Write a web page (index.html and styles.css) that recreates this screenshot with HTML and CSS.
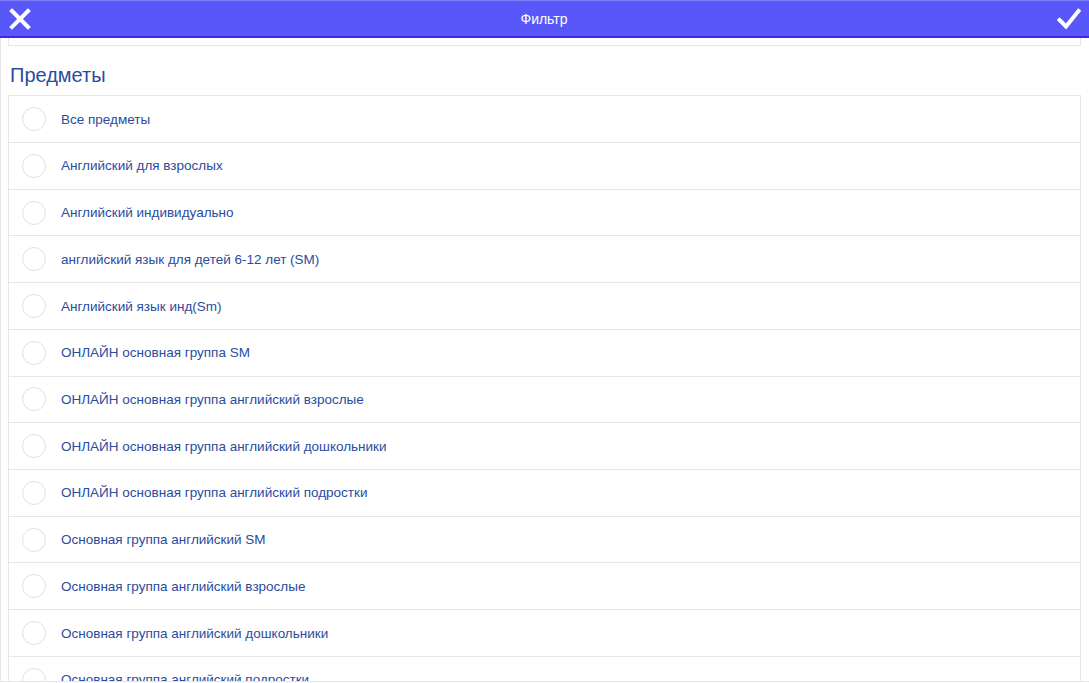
FILE: index.html
```html
<!DOCTYPE html>
<html lang="ru">
<head>
<meta charset="utf-8">
<title>Фильтр</title>
<link rel="stylesheet" href="styles.css">
</head>
<body>
<header class="header">
  <button class="hbtn close" aria-label="Закрыть">
    <svg width="22" height="22" viewBox="0 0 22 22"><path d="M3 3 L19 19 M19 3 L3 19" stroke="#fff" stroke-width="4" stroke-linecap="square" fill="none"/></svg>
  </button>
  <div class="title">Фильтр</div>
  <button class="hbtn ok" aria-label="Применить">
    <svg width="24" height="22" viewBox="0 0 24 22"><path d="M2.5 12 L9 18.5 L21.5 3" stroke="#fff" stroke-width="4" stroke-linecap="square" stroke-linejoin="miter" fill="none"/></svg>
  </button>
</header>
<main class="content">
  <div class="prev-card"></div>
  <h2 class="section-title">Предметы</h2>
  <ul class="list">
    <li class="row"><span class="radio"></span><span class="label">Все предметы</span></li>
    <li class="row"><span class="radio"></span><span class="label">Английский для взрослых</span></li>
    <li class="row"><span class="radio"></span><span class="label">Английский индивидуально</span></li>
    <li class="row"><span class="radio"></span><span class="label">английский язык для детей 6-12 лет (SM)</span></li>
    <li class="row"><span class="radio"></span><span class="label">Английский язык инд(Sm)</span></li>
    <li class="row"><span class="radio"></span><span class="label">ОНЛАЙН основная группа SM</span></li>
    <li class="row"><span class="radio"></span><span class="label">ОНЛАЙН основная группа английский взрослые</span></li>
    <li class="row"><span class="radio"></span><span class="label">ОНЛАЙН основная группа английский дошкольники</span></li>
    <li class="row"><span class="radio"></span><span class="label">ОНЛАЙН основная группа английский подростки</span></li>
    <li class="row"><span class="radio"></span><span class="label">Основная группа английский SM</span></li>
    <li class="row"><span class="radio"></span><span class="label">Основная группа английский взрослые</span></li>
    <li class="row"><span class="radio"></span><span class="label">Основная группа английский дошкольники</span></li>
    <li class="row"><span class="radio"></span><span class="label">Основная группа английский подростки</span></li>
  </ul>
</main>
</body>
</html>
```
FILE: styles.css
```css
* { box-sizing: border-box; }
html, body { margin: 0; padding: 0; background: #fff; }
body {
  font-family: "Liberation Sans", Arial, sans-serif;
  width: 1089px;
  height: 683px;
  overflow: hidden;
}
.header {
  height: 38px;
  background: #5858fa;
  border-bottom: 2px solid #4a22ea;
  border-top: 1px solid #7e7efb;
  display: flex;
  align-items: center;
  justify-content: space-between;
  padding: 0 8px 0 9px;
}
.hbtn {
  background: none;
  border: 0;
  padding: 0;
  margin: 0;
  display: flex;
  align-items: center;
  cursor: pointer;
}
.title {
  color: #fff;
  font-size: 14px;
  line-height: 16px;
  margin-top: 1px;
}
.content {
  height: 644px;
  overflow: hidden;
  border-left: 1px solid #e6e6e6;
  border-bottom: 1px solid #e6e6e6;
  padding: 0 8px 0 7px;
}
.prev-card {
  height: 8px;
  border: 1px solid #e6e6e6;
  border-top: 0;
}
.section-title {
  margin: 0;
  padding: 17px 0 0 2px;
  height: 49px;
  font-size: 20px;
  line-height: 24px;
  font-weight: normal;
  color: #2e4a9e;
}
.list {
  list-style: none;
  margin: 0;
  padding: 0;
  border: 1px solid #e6e6e6;
  border-bottom: 0;
}
.row {
  height: 46.73px;
  border-bottom: 1px solid #e6e6e6;
  display: flex;
  align-items: center;
  padding-left: 13px;
}
.row:first-child { height: 47px; }
.radio {
  width: 24px;
  height: 24px;
  border: 1px solid #e0e0e0;
  border-radius: 50%;
  flex: none;
}
.label {
  margin-left: 15px;
  font-size: 13.5px;
  color: #2a4c9e;
}
```
